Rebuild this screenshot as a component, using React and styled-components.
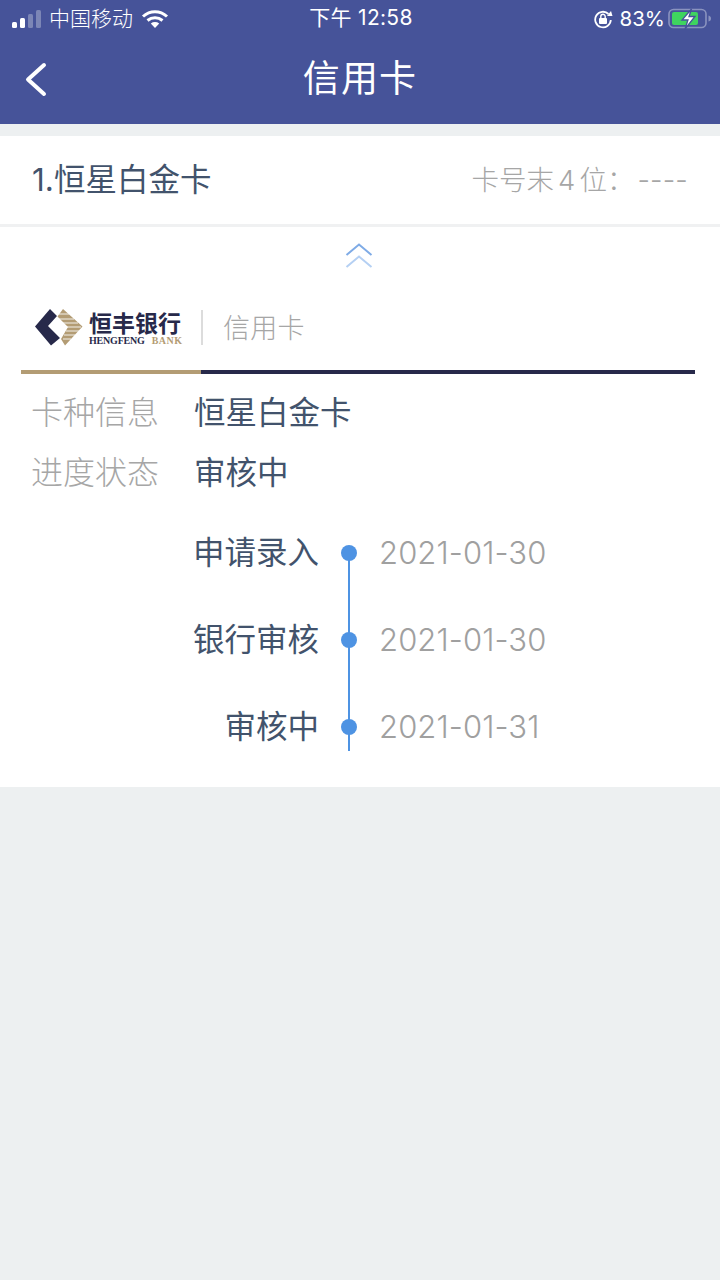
import React from "react";
import styled, { createGlobalStyle } from "styled-components";

const Global = createGlobalStyle`
  html, body { margin: 0; padding: 0; background: #edf0f1; }
  body { font-family: Inter, "Noto Sans CJK SC", "Noto Sans", sans-serif; }
`;
const Page = styled.div`width: 720px; height: 1280px; background: #edf0f1; overflow: hidden;`;
const Header = styled.header`height: 124px; background: #465399; color: #fff; display: flex; flex-direction: column;`;
const StatusBar = styled.div`height: 36px; display: grid; grid-template-columns: 1fr auto 1fr; align-items: center; padding: 0 8px 0 12px; font-size: 21px; line-height: 36px;`;
const StatusLeft = styled.div`display: flex; align-items: center; gap: 7px;`;
const StatusRight = styled.div`display: flex; align-items: center; justify-content: flex-end; gap: 7px; font-size: 20.500px; font-weight: 400;`;
const BatteryGap = styled.div`margin-left: -4px;`;
const Carrier = styled.span`font-weight: 300; margin-right: 1px;`;
const Clock = styled.span`font-weight: 400; letter-spacing: 0.3px; margin-right: 2px; padding-bottom: 1px;`;
const Nav = styled.div`flex: 1; display: grid; grid-template-columns: 72px 1fr 72px; align-items: center; padding-bottom: 2px;`;
const Back = styled.div`display: flex; padding-left: 24px; padding-top: 2px;`;
const Title = styled.h1`margin: 0; text-align: center; font-size: 37px; font-weight: 400; line-height: 44px; letter-spacing: 1.2px;`;

const CardHead = styled.div`margin-top: 12px; height: 88px; background: #fff; border-bottom: 3px solid #f0f1f2; display: flex; align-items: center; justify-content: space-between; padding: 0 32px;`;
const CardName = styled.div`font-size: 31.500px; line-height: 42px; color: #42536c; font-weight: 400;`;
const CardNo = styled.div`font-size: 27.500px; line-height: 42px; color: #a6a6a6; font-weight: 300; display: flex;`;
const Digit = styled.span`margin: 0 4px; font-weight: 300;`;
const Dashes = styled.span`letter-spacing: 0.2px; margin-left: 3px;`;
const Panel = styled.section`background: #fff; height: 560px; display: flex; flex-direction: column;`;
const Toggle = styled.div`flex: none; display: flex; justify-content: center; padding: 16px 2px 0 0; height: 30px;`;
const Brand = styled.div`flex: none; display: flex; align-items: center; height: 85px; padding: 12px 0 0 35px;`;
const BankName = styled.div`display: flex; flex-direction: column; margin-left: 6px; width: 93px;`;
const BankCn = styled.span`font-family: "Noto Sans CJK SC", sans-serif; font-size: 23px; line-height: 25px; font-weight: 700; color: #27294a; white-space: nowrap;`;
const BankEn = styled.span`font-family: "Liberation Serif", serif; font-size: 10px; line-height: 11px; font-weight: 700; color: #27294a; white-space: nowrap; letter-spacing: -0.2px; display: flex;`;
const Gold = styled.span`color: #b39c74; margin-left: 7px; letter-spacing: 0.5px;`;
const Sep = styled.div`width: 2px; height: 35px; background: #dcdcdc; margin: 0 20px 0 19px;`;
const BrandTag = styled.span`font-size: 27px; color: #a6a6a6; font-weight: 300; letter-spacing: 0.3px; padding-bottom: 2px;`;
const Rule = styled.div`margin: 0 25px 0 21px; height: 4px; flex: none; background: #27294a; display: flex;`;
const RuleGold = styled.div`width: 180px; background: #b39c74;`;
const Info = styled.div`flex: none; padding: 16px 0 0 31px; display: flex; flex-direction: column; gap: 14px;`;
const InfoRow = styled.div`display: flex; height: 46px; align-items: center;`;
const InfoLabel = styled.span`width: 163px; font-size: 32px; line-height: 46px; color: #a6a6a6; font-weight: 300;`;
const InfoValue = styled.span`font-size: 31.500px; line-height: 46px; color: #42536c; font-weight: 400;`;
const Timeline = styled.div`flex: none; display: flex; flex-direction: column; margin-top: 34px;`;
const Step = styled.div`display: grid; grid-template-columns: 319px 60px auto; height: 87px; align-items: start; &:last-child { height: 47px; }`;
const StepName = styled.span`text-align: right; font-size: 31.500px; line-height: 46px; color: #42536c; font-weight: 400;`;
const Track = styled.div`position: relative; height: 100%; display: flex; justify-content: center;`;
const Line = styled.div`width: 2px; flex: none; height: ${p => (p.$last ? 24 : 87)}px; margin-top: 23px; background: #4e93e3;`;
const Dot = styled.div`position: absolute; left: 22px; top: 15px; width: 16px; height: 16px; border-radius: 50%; background: #4e93e3;`;
const StepDate = styled.span`font-size: 31px; line-height: 46px; font-weight: 300; color: #a0a0a0; letter-spacing: 0.1px;`;

const Signal = () => (
  <svg width="30" height="20" viewBox="0 0 30 20" style={{ display: "block" }}>
    <rect x="0" y="13" width="5" height="6" rx="1.5" fill="#fff" />
    <rect x="8" y="9" width="5" height="10" rx="1.5" fill="#fff" />
    <rect x="16" y="5" width="5" height="14" rx="1.5" fill="#7c86b6" />
    <rect x="24" y="1" width="5" height="18" rx="1.5" fill="#7c86b6" />
  </svg>
);
const Wifi = () => (
  <svg width="28" height="20" viewBox="0 0 28 20" fill="none" stroke="#fff" style={{ display: "block" }}>
    <path d="M2 7.5C9 1 19 1 26 7.5" strokeWidth="3" />
    <path d="M6.5 11.5c4.5-3.8 10.500-3.800 15 0" strokeWidth="3" />
    <path d="M14 19l-4.200-4.600c2.500-1.800 5.900-1.800 8.400 0z" fill="#fff" stroke="none" />
  </svg>
);
const Rotation = () => (
  <svg width="20" height="20" viewBox="0 0 20 20" fill="none" style={{ display: "block" }}>
    <path d="M15.500 5A7.800 7.800 0 1 0 17.800 11" stroke="#fff" strokeWidth="1.800" />
    <path d="M14 7h5.500L18 2z" fill="#fff" />
    <rect x="6" y="9" width="8" height="6" rx="1" fill="#fff" />
    <path d="M7.800 9V7.500a2.200 2.200 0 0 1 4.400 0V9" stroke="#fff" strokeWidth="1.400" />
  </svg>
);
const Battery = () => (
  <svg width="44" height="22" viewBox="0 0 44 22" style={{ display: "block" }}>
    <rect x="1" y="1.500" width="37" height="18" rx="4.500" fill="none" stroke="#8a93bf" strokeWidth="1.600" />
    <rect x="4" y="4" width="26" height="13" rx="2" fill="#3fd45f" />
    <path d="M40.500 7.500c1.800.5 2.500 1.500 2.500 3s-.7 2.500-2.500 3z" fill="#8a93bf" />
    <path d="M23.500 1 14 12h6l-3 9 10-12.500h-6z" fill="#fff" stroke="#465399" strokeWidth="1.300" />
  </svg>
);
const BackIcon = () => (
  <svg width="24" height="36" viewBox="0 0 24 36" fill="none" stroke="#fff" strokeWidth="4" strokeLinecap="round" strokeLinejoin="round" style={{ display: "block" }}>
    <path d="M20 3 4 17.500 20 32" />
  </svg>
);
const Chevrons = () => (
  <svg width="28" height="28" viewBox="0 0 28 28" fill="none" strokeWidth="2" style={{ display: "block" }}>
    <path d="M1.500 12 14 1.500 26.500 12" stroke="#7fabe6" />
    <path d="M1.500 24 14 13.500 26.500 24" stroke="#b5d0f3" />
  </svg>
);
const BankLogo = () => (
  <svg width="48" height="37" viewBox="0 0 48 37" style={{ display: "block" }}>
    <path d="M15 0 22 7 13 17 25 29 16 36.500 0 17.500z" fill="#27294a" />
    <path d="M28 0 47.500 17.500 30 36.500 26 30 33 18 22.500 7.500z" fill="#b39c74" />
    <g stroke="#fff" strokeWidth="1.200" opacity=".85">
      <path d="M24 5h10M23 10h16M27 14h16M31 18h15M31 22h13M29 26h11M28 30h8" />
    </g>
  </svg>
);

const steps = [
  ["申请录入", "2021-01-30"],
  ["银行审核", "2021-01-30"],
  ["审核中", "2021-01-31"],
];

export default function App() {
  return (
    <Page>
      <Global />
      <Header>
        <StatusBar>
          <StatusLeft>
            <Signal />
            <Carrier>中国移动</Carrier>
            <Wifi />
          </StatusLeft>
          <Clock>下午 12:58</Clock>
          <StatusRight>
            <Rotation />
            <span>83%</span>
            <BatteryGap><Battery /></BatteryGap>
          </StatusRight>
        </StatusBar>
        <Nav>
          <Back><BackIcon /></Back>
          <Title>信用卡</Title>
        </Nav>
      </Header>
      <CardHead>
        <CardName>1.恒星白金卡</CardName>
        <CardNo>卡号末<Digit>4</Digit>位：<Dashes>----</Dashes></CardNo>
      </CardHead>
      <Panel>
        <Toggle><Chevrons /></Toggle>
        <Brand>
          <BankLogo />
          <BankName>
            <BankCn>恒丰银行</BankCn>
            <BankEn>HENGFENG<Gold>BANK</Gold></BankEn>
          </BankName>
          <Sep />
          <BrandTag>信用卡</BrandTag>
        </Brand>
        <Rule><RuleGold /></Rule>
        <Info>
          <InfoRow><InfoLabel>卡种信息</InfoLabel><InfoValue>恒星白金卡</InfoValue></InfoRow>
          <InfoRow><InfoLabel>进度状态</InfoLabel><InfoValue>审核中</InfoValue></InfoRow>
        </Info>
        <Timeline>
          {steps.map(([name, date], i) => (
            <Step key={name}>
              <StepName>{name}</StepName>
              <Track><Line $last={i === steps.length - 1} /><Dot /></Track>
              <StepDate>{date}</StepDate>
            </Step>
          ))}
        </Timeline>
      </Panel>
    </Page>
  );
}
